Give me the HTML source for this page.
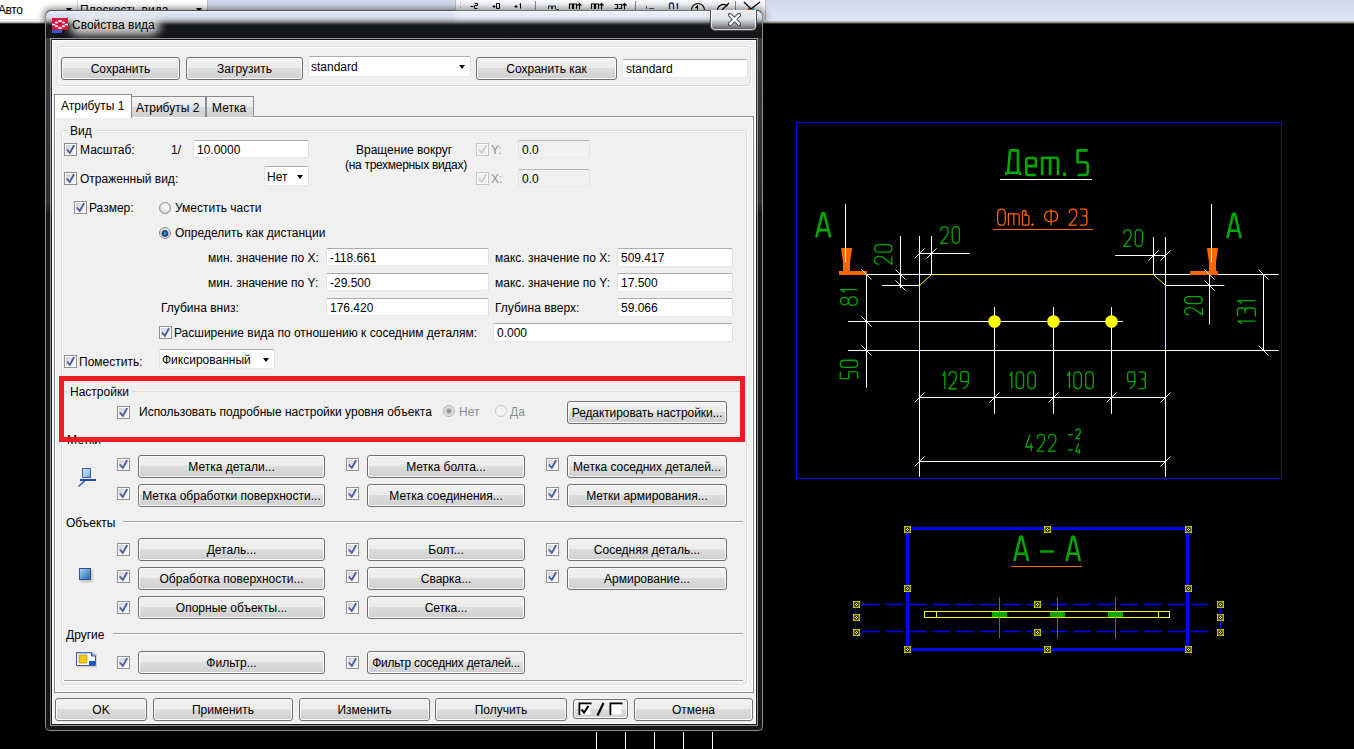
<!DOCTYPE html>
<html><head><meta charset="utf-8"><style>
*{box-sizing:border-box}
html,body{margin:0;padding:0}
body{width:1354px;height:749px;background:#000;position:relative;overflow:hidden;font-family:"Liberation Sans",sans-serif;font-size:12px;color:#000}
.a{position:absolute}
.t{position:absolute;white-space:nowrap;font-size:12px;line-height:14px;margin-left:-1px}
.btn{position:absolute;border:1px solid #707070;border-radius:3px;background:linear-gradient(#f2f2f2 0%,#ebebeb 48%,#dddddd 50%,#cfcfcf 100%);box-shadow:inset 0 0 0 1px #fcfcfc;text-align:center;white-space:nowrap;font-size:12px;padding-top:1px}
.tb{position:absolute;background:#fff;border:1px solid;border-color:#abadb3 #dbdfe6 #e3e9ef #e2e3ea;white-space:nowrap;font-size:12px;padding-left:3px;padding-top:1px;border-radius:2px}
.tbd{background:#f1f1f1;border-color:#b5b7bd #dfe2e8 #e6e9ee #e2e3ea}
.cb{position:absolute;width:13px;height:13px;border:1px solid #8e8f8f;background:#fff}
.cb::before{content:"";position:absolute;left:1px;top:1px;width:9px;height:9px;background:linear-gradient(135deg,#c9ced6,#eceef0 60%,#f6f6f6)}
.cb svg{position:absolute;left:-1px;top:-1px}
.cbd{border-color:#c6c6c6}
.cbd::before{background:#f0f0f0}
.rd{position:absolute;width:12px;height:12px;border-radius:50%;border:1px solid #8e8f8f;background:radial-gradient(circle at 60% 35%,#fff,#e4e6ea 50%,#c8ccd2)}
.grp{position:absolute;border:1px solid #d5dfe5;border-radius:3px;box-shadow:inset 1px 1px 0 #fff,1px 1px 0 #fff}
.sep{position:absolute;height:1px;background:#a0a0a0}
.lbl{position:absolute;background:#f0f0f0;padding:0 2px;white-space:nowrap;line-height:14px}
.arr{position:absolute;width:0;height:0;border-left:3.5px solid transparent;border-right:3.5px solid transparent;border-top:4px solid #000}
</style></head><body>
<svg class="a" style="left:0;top:0" width="1354" height="749" font-family="Liberation Sans"><rect x="796.5" y="122.5" width="485" height="356" fill="none" stroke="#0000ff" stroke-width="1"/><g transform="translate(1005.00,149.10) scale(2.7141,2.7200)" fill="none" stroke="#00a800" stroke-width="2.6" stroke-linecap="butt" stroke-linejoin="round"><path vector-effect="non-scaling-stroke" transform="translate(0.479,0.478) scale(0.8403,0.9044)" d="M1.6 0 L5.1 0 L5.1 9.1 M1.6 0 L0.8 9.1 M0 10 L0 9.1 L6 9.1 L6 10"/><path vector-effect="non-scaling-stroke" transform="translate(7.829,0.478) scale(0.7871,0.9044)" d="M0 6.4 L4.5 6.4 L4.5 4.1 Q4.5 3.1 3.5 3.1 L1 3.1 Q0 3.1 0 4.1 L0 9 Q0 10 1 10 L4.5 10"/><path vector-effect="non-scaling-stroke" transform="translate(13.679,0.478) scale(0.8591,0.9044)" d="M0 10 L0 3 L5.8 3 Q6.8 3 6.8 4 L6.8 10 M3.4 3 L3.4 10"/><path vector-effect="non-scaling-stroke" transform="translate(21.829,0.478) scale(0.2017,0.9044)" d="M0 9.4 L1.2 9.4 L1.2 10 L0 10 Z"/><path vector-effect="non-scaling-stroke" transform="translate(26.729,0.478) scale(0.7962,0.9044)" d="M4.7 0 L0 0 L0 4.8 L3.5 4.8 Q4.7 4.8 4.7 6 L4.7 8.8 Q4.7 10 3.5 10 L0 10"/></g><line x1="1000" y1="179.5" x2="1092" y2="179.5" stroke="#ffffff" stroke-width="1"/><g transform="translate(997.00,208.40) scale(1.7710,1.7400)" fill="none" stroke="#ff6600" stroke-width="1.25" stroke-linecap="butt" stroke-linejoin="round"><path vector-effect="non-scaling-stroke" transform="translate(0.353,0.359) scale(0.8588,0.9282)" d="M0 2.5 Q0 0 2.5 0 Q5 0 5 2.5 L5 7.5 Q5 10 2.5 10 Q0 10 0 7.5 Z"/><path vector-effect="non-scaling-stroke" transform="translate(6.453,0.359) scale(0.8962,0.9282)" d="M0 10 L0 3 L5.8 3 Q6.8 3 6.8 4 L6.8 10 M3.4 3 L3.4 10"/><path vector-effect="non-scaling-stroke" transform="translate(14.353,0.359) scale(0.8396,0.9282)" d="M0 10 L0 2.2 Q0 0.8 1.3 0.8 Q2.5 0.8 2.5 2.2 Q2.5 3.8 1.3 3.8 L3.2 3.8 Q4.4 3.8 4.4 5 L4.4 8.8 Q4.4 10 3.2 10 L0 10"/><path vector-effect="non-scaling-stroke" transform="translate(19.853,0.359) scale(0.4118,0.9282)" d="M0 9.4 L1.2 9.4 L1.2 10 L0 10 Z"/><path vector-effect="non-scaling-stroke" transform="translate(26.853,0.359) scale(0.9129,0.9282)" d="M4.05 0 L4.05 10 M4.05 1.1 Q0 1.1 0 4.5 Q0 7.8 4.05 7.8 Q8.1 7.8 8.1 4.5 Q8.1 1.1 4.05 1.1 Z"/><path vector-effect="non-scaling-stroke" transform="translate(40.753,0.359) scale(0.8588,0.9282)" d="M0 2.6 Q0 0 2.5 0 Q5 0 5 2.8 Q5 4.4 3.9 5.6 L0 10 L5 10"/><path vector-effect="non-scaling-stroke" transform="translate(46.853,0.359) scale(0.8466,0.9282)" d="M0 0 L3.2 0 Q4.6 0 4.6 1.5 L4.6 2.8 Q4.6 4.3 3.2 4.3 L1.6 4.3 M3.2 4.3 Q4.6 4.3 4.6 6 L4.6 8.5 Q4.6 10 3.2 10 L0 10"/></g><line x1="993" y1="229.5" x2="1093" y2="229.5" stroke="#ff6600" stroke-width="1"/><g transform="translate(815.00,212.00) scale(2.6613,2.6600)" fill="none" stroke="#00a800" stroke-width="2.6" stroke-linecap="butt" stroke-linejoin="round"><path vector-effect="non-scaling-stroke" transform="translate(0.488,0.489) scale(0.8424,0.9023)" d="M0 10 L2.7 0 L3.5 0 L6.2 10 M0.9 7 L5.3 7"/></g><g transform="translate(1226.00,212.40) scale(2.5806,2.7000)" fill="none" stroke="#00a800" stroke-width="2.6" stroke-linecap="butt" stroke-linejoin="round"><path vector-effect="non-scaling-stroke" transform="translate(0.504,0.481) scale(0.8375,0.9037)" d="M0 10 L2.7 0 L3.5 0 L6.2 10 M0.9 7 L5.3 7"/></g><line x1="867" y1="274.5" x2="931.5" y2="274.5" stroke="#ffffff" stroke-width="1"/><line x1="931.5" y1="274.5" x2="1153.3" y2="274.5" stroke="#ffff00" stroke-width="1"/><line x1="1153.3" y1="274.5" x2="1278.8" y2="274.5" stroke="#ffffff" stroke-width="1"/><path d="M841 249 Q841 248 842 248 L851 248 Q852 248 852 249 L850 262 L850 271 L843 271 L843 262 Z" fill="#ff6600"/><rect x="839" y="271" width="28" height="4" fill="#ff6600"/><path d="M1207 249 Q1207 248 1208 248 L1217 248 Q1218 248 1218 249 L1216 262 L1216 271 L1209 271 L1209 262 Z" fill="#ff6600"/><rect x="1190" y="271" width="28" height="4" fill="#ff6600"/><line x1="845.5" y1="204" x2="845.5" y2="262" stroke="#ffffff" stroke-width="1"/><line x1="1211.5" y1="204" x2="1211.5" y2="262" stroke="#ffffff" stroke-width="1"/><line x1="919.5" y1="285.5" x2="931.5" y2="274.5" stroke="#ffff00" stroke-width="1"/><line x1="1153.5" y1="274.5" x2="1165.5" y2="285.5" stroke="#ffff00" stroke-width="1"/><line x1="919.5" y1="285.5" x2="919.5" y2="350.5" stroke="#ffff00" stroke-width="1"/><line x1="1165.5" y1="285.5" x2="1165.5" y2="350.5" stroke="#ffff00" stroke-width="1"/><line x1="919.5" y1="350.5" x2="919.5" y2="476.7" stroke="#ffffff" stroke-width="1"/><line x1="1165.5" y1="350.5" x2="1165.5" y2="476.7" stroke="#ffffff" stroke-width="1"/><line x1="866.5" y1="274.5" x2="866.5" y2="387.7" stroke="#ffffff" stroke-width="1"/><line x1="861.5" y1="269.5" x2="871.5" y2="279.5" stroke="#ffffff" stroke-width="1"/><line x1="861.5" y1="316.5" x2="871.5" y2="326.5" stroke="#ffffff" stroke-width="1"/><line x1="861.5" y1="345.5" x2="871.5" y2="355.5" stroke="#ffffff" stroke-width="1"/><g transform="translate(840.00,306.00) rotate(-90) scale(2.0482,1.8000)" fill="none" stroke="#00a800" stroke-width="1.3" stroke-linecap="butt" stroke-linejoin="round"><path vector-effect="non-scaling-stroke" transform="translate(0.317,0.361) scale(0.8678,0.9278)" d="M2.4 4.6 Q0.3 4.6 0.3 2.3 Q0.3 0 2.4 0 Q4.5 0 4.5 2.3 Q4.5 4.6 2.4 4.6 Q0 4.6 0 7.3 Q0 10 2.4 10 Q4.8 10 4.8 7.3 Q4.8 4.6 2.4 4.6 Z"/><path vector-effect="non-scaling-stroke" transform="translate(6.717,0.361) scale(0.6659,0.9278)" d="M0 2.6 L1.9 0 L1.9 10"/></g><g transform="translate(839.60,379.30) rotate(-90) scale(1.7748,1.8800)" fill="none" stroke="#00a800" stroke-width="1.3" stroke-linecap="butt" stroke-linejoin="round"><path vector-effect="non-scaling-stroke" transform="translate(0.366,0.346) scale(0.8442,0.9309)" d="M4.7 0 L0 0 L0 4.8 L3.5 4.8 Q4.7 4.8 4.7 6 L4.7 8.8 Q4.7 10 3.5 10 L0 10"/><path vector-effect="non-scaling-stroke" transform="translate(6.666,0.346) scale(0.8474,0.9309)" d="M0 2.5 Q0 0 2.4 0 Q4.8 0 4.8 2.5 L4.8 7.5 Q4.8 10 2.4 10 Q0 10 0 7.5 Z"/></g><line x1="900.5" y1="236" x2="900.5" y2="288" stroke="#ffffff" stroke-width="1"/><line x1="895.5" y1="269.5" x2="905.5" y2="279.5" stroke="#ffffff" stroke-width="1"/><line x1="895.5" y1="280.5" x2="905.5" y2="290.5" stroke="#ffffff" stroke-width="1"/><line x1="882" y1="285.5" x2="919.5" y2="285.5" stroke="#ffffff" stroke-width="1"/><g transform="translate(874.00,265.00) rotate(-90) scale(1.8421,1.8500)" fill="none" stroke="#00a800" stroke-width="1.3" stroke-linecap="butt" stroke-linejoin="round"><path vector-effect="non-scaling-stroke" transform="translate(0.353,0.351) scale(0.8589,0.9297)" d="M0 2.6 Q0 0 2.5 0 Q5 0 5 2.8 Q5 4.4 3.9 5.6 L0 10 L5 10"/><path vector-effect="non-scaling-stroke" transform="translate(6.953,0.351) scale(0.8530,0.9297)" d="M0 2.5 Q0 0 2.4 0 Q4.8 0 4.8 2.5 L4.8 7.5 Q4.8 10 2.4 10 Q0 10 0 7.5 Z"/></g><line x1="919.5" y1="236" x2="919.5" y2="285.5" stroke="#ffffff" stroke-width="1"/><line x1="931.5" y1="236" x2="931.5" y2="274.5" stroke="#ffffff" stroke-width="1"/><line x1="919.5" y1="253.5" x2="969.8" y2="253.5" stroke="#ffffff" stroke-width="1"/><line x1="914.5" y1="258.5" x2="924.5" y2="248.5" stroke="#ffffff" stroke-width="1"/><line x1="926.5" y1="258.5" x2="936.5" y2="248.5" stroke="#ffffff" stroke-width="1"/><g transform="translate(940.00,226.00) scale(1.7544,1.8000)" fill="none" stroke="#00a800" stroke-width="1.3" stroke-linecap="butt" stroke-linejoin="round"><path vector-effect="non-scaling-stroke" transform="translate(0.370,0.361) scale(0.8518,0.9278)" d="M0 2.6 Q0 0 2.5 0 Q5 0 5 2.8 Q5 4.4 3.9 5.6 L0 10 L5 10"/><path vector-effect="non-scaling-stroke" transform="translate(6.970,0.361) scale(0.8456,0.9278)" d="M0 2.5 Q0 0 2.4 0 Q4.8 0 4.8 2.5 L4.8 7.5 Q4.8 10 2.4 10 Q0 10 0 7.5 Z"/></g><line x1="1153.5" y1="237" x2="1153.5" y2="274.5" stroke="#ffffff" stroke-width="1"/><line x1="1165.5" y1="237" x2="1165.5" y2="285.5" stroke="#ffffff" stroke-width="1"/><line x1="1115.2" y1="255.5" x2="1165.5" y2="255.5" stroke="#ffffff" stroke-width="1"/><line x1="1148.5" y1="260.5" x2="1158.5" y2="250.5" stroke="#ffffff" stroke-width="1"/><line x1="1160.5" y1="260.5" x2="1170.5" y2="250.5" stroke="#ffffff" stroke-width="1"/><g transform="translate(1123.00,229.00) scale(1.7544,1.8000)" fill="none" stroke="#00a800" stroke-width="1.3" stroke-linecap="butt" stroke-linejoin="round"><path vector-effect="non-scaling-stroke" transform="translate(0.370,0.361) scale(0.8518,0.9278)" d="M0 2.6 Q0 0 2.5 0 Q5 0 5 2.8 Q5 4.4 3.9 5.6 L0 10 L5 10"/><path vector-effect="non-scaling-stroke" transform="translate(6.970,0.361) scale(0.8456,0.9278)" d="M0 2.5 Q0 0 2.4 0 Q4.8 0 4.8 2.5 L4.8 7.5 Q4.8 10 2.4 10 Q0 10 0 7.5 Z"/></g><line x1="1209.5" y1="274.5" x2="1209.5" y2="324.4" stroke="#ffffff" stroke-width="1"/><line x1="1204.5" y1="269.5" x2="1214.5" y2="279.5" stroke="#ffffff" stroke-width="1"/><line x1="1204.5" y1="280.5" x2="1214.5" y2="290.5" stroke="#ffffff" stroke-width="1"/><line x1="1165.5" y1="285.5" x2="1224.3" y2="285.5" stroke="#ffffff" stroke-width="1"/><g transform="translate(1184.00,315.50) rotate(-90) scale(1.7105,1.9000)" fill="none" stroke="#00a800" stroke-width="1.3" stroke-linecap="butt" stroke-linejoin="round"><path vector-effect="non-scaling-stroke" transform="translate(0.380,0.342) scale(0.8480,0.9316)" d="M0 2.6 Q0 0 2.5 0 Q5 0 5 2.8 Q5 4.4 3.9 5.6 L0 10 L5 10"/><path vector-effect="non-scaling-stroke" transform="translate(6.980,0.342) scale(0.8417,0.9316)" d="M0 2.5 Q0 0 2.4 0 Q4.8 0 4.8 2.5 L4.8 7.5 Q4.8 10 2.4 10 Q0 10 0 7.5 Z"/></g><line x1="1263.5" y1="274.5" x2="1263.5" y2="350.5" stroke="#ffffff" stroke-width="1"/><line x1="1258.5" y1="269.5" x2="1268.5" y2="279.5" stroke="#ffffff" stroke-width="1"/><line x1="1258.5" y1="345.5" x2="1268.5" y2="355.5" stroke="#ffffff" stroke-width="1"/><g transform="translate(1237.00,324.40) rotate(-90) scale(2.1034,1.9000)" fill="none" stroke="#00a800" stroke-width="1.3" stroke-linecap="butt" stroke-linejoin="round"><path vector-effect="non-scaling-stroke" transform="translate(0.309,0.342) scale(0.6747,0.9316)" d="M0 2.6 L1.9 0 L1.9 10"/><path vector-effect="non-scaling-stroke" transform="translate(3.809,0.342) scale(0.8656,0.9316)" d="M0 0 L3.2 0 Q4.6 0 4.6 1.5 L4.6 2.8 Q4.6 4.3 3.2 4.3 L1.6 4.3 M3.2 4.3 Q4.6 4.3 4.6 6 L4.6 8.5 Q4.6 10 3.2 10 L0 10"/><path vector-effect="non-scaling-stroke" transform="translate(10.009,0.342) scale(0.6747,0.9316)" d="M0 2.6 L1.9 0 L1.9 10"/></g><line x1="848" y1="321.5" x2="1123.2" y2="321.5" stroke="#ffffff" stroke-width="1"/><line x1="848" y1="350.5" x2="1278.8" y2="350.5" stroke="#ffffff" stroke-width="1"/><line x1="994.5" y1="307" x2="994.5" y2="413.8" stroke="#ffffff" stroke-width="1"/><circle cx="994.5" cy="321.5" r="6.3" fill="#ffff00"/><line x1="1053.5" y1="307" x2="1053.5" y2="413.8" stroke="#ffffff" stroke-width="1"/><circle cx="1053.5" cy="321.5" r="6.3" fill="#ffff00"/><line x1="1111.5" y1="307" x2="1111.5" y2="413.8" stroke="#ffffff" stroke-width="1"/><circle cx="1111.5" cy="321.5" r="6.3" fill="#ffff00"/><line x1="919.5" y1="397.5" x2="1165.5" y2="397.5" stroke="#ffffff" stroke-width="1"/><line x1="914.5" y1="402.5" x2="924.5" y2="392.5" stroke="#ffffff" stroke-width="1"/><line x1="989.5" y1="402.5" x2="999.5" y2="392.5" stroke="#ffffff" stroke-width="1"/><line x1="1048.5" y1="402.5" x2="1058.5" y2="392.5" stroke="#ffffff" stroke-width="1"/><line x1="1106.5" y1="402.5" x2="1116.5" y2="392.5" stroke="#ffffff" stroke-width="1"/><line x1="1160.5" y1="402.5" x2="1170.5" y2="392.5" stroke="#ffffff" stroke-width="1"/><g transform="translate(942.00,371.00) scale(1.7881,1.8400)" fill="none" stroke="#00a800" stroke-width="1.3" stroke-linecap="butt" stroke-linejoin="round"><path vector-effect="non-scaling-stroke" transform="translate(0.364,0.353) scale(0.6173,0.9293)" d="M0 2.6 L1.9 0 L1.9 10"/><path vector-effect="non-scaling-stroke" transform="translate(3.864,0.353) scale(0.8546,0.9293)" d="M0 2.6 Q0 0 2.5 0 Q5 0 5 2.8 Q5 4.4 3.9 5.6 L0 10 L5 10"/><path vector-effect="non-scaling-stroke" transform="translate(10.464,0.353) scale(0.8546,0.9293)" d="M5 5.8 L1.3 5.8 Q0 5.8 0 4.5 L0 1.5 Q0 0 1.5 0 L3.5 0 Q5 0 5 1.5 L5 6 Q5 8.6 1.3 10"/></g><g transform="translate(1009.00,371.20) scale(1.8367,1.8000)" fill="none" stroke="#00a800" stroke-width="1.3" stroke-linecap="butt" stroke-linejoin="round"><path vector-effect="non-scaling-stroke" transform="translate(0.354,0.361) scale(0.6275,0.9278)" d="M0 2.6 L1.9 0 L1.9 10"/><path vector-effect="non-scaling-stroke" transform="translate(3.854,0.361) scale(0.8525,0.9278)" d="M0 2.5 Q0 0 2.4 0 Q4.8 0 4.8 2.5 L4.8 7.5 Q4.8 10 2.4 10 Q0 10 0 7.5 Z"/><path vector-effect="non-scaling-stroke" transform="translate(10.254,0.361) scale(0.8525,0.9278)" d="M0 2.5 Q0 0 2.4 0 Q4.8 0 4.8 2.5 L4.8 7.5 Q4.8 10 2.4 10 Q0 10 0 7.5 Z"/></g><g transform="translate(1066.60,371.20) scale(1.8639,1.8000)" fill="none" stroke="#00a800" stroke-width="1.3" stroke-linecap="butt" stroke-linejoin="round"><path vector-effect="non-scaling-stroke" transform="translate(0.349,0.361) scale(0.6329,0.9278)" d="M0 2.6 L1.9 0 L1.9 10"/><path vector-effect="non-scaling-stroke" transform="translate(3.849,0.361) scale(0.8547,0.9278)" d="M0 2.5 Q0 0 2.4 0 Q4.8 0 4.8 2.5 L4.8 7.5 Q4.8 10 2.4 10 Q0 10 0 7.5 Z"/><path vector-effect="non-scaling-stroke" transform="translate(10.249,0.361) scale(0.8547,0.9278)" d="M0 2.5 Q0 0 2.4 0 Q4.8 0 4.8 2.5 L4.8 7.5 Q4.8 10 2.4 10 Q0 10 0 7.5 Z"/></g><g transform="translate(1127.00,371.20) scale(1.6964,1.8000)" fill="none" stroke="#00a800" stroke-width="1.3" stroke-linecap="butt" stroke-linejoin="round"><path vector-effect="non-scaling-stroke" transform="translate(0.383,0.361) scale(0.8467,0.9278)" d="M5 5.8 L1.3 5.8 Q0 5.8 0 4.5 L0 1.5 Q0 0 1.5 0 L3.5 0 Q5 0 5 1.5 L5 6 Q5 8.6 1.3 10"/><path vector-effect="non-scaling-stroke" transform="translate(6.983,0.361) scale(0.8334,0.9278)" d="M0 0 L3.2 0 Q4.6 0 4.6 1.5 L4.6 2.8 Q4.6 4.3 3.2 4.3 L1.6 4.3 M3.2 4.3 Q4.6 4.3 4.6 6 L4.6 8.5 Q4.6 10 3.2 10 L0 10"/></g><line x1="919.5" y1="461.5" x2="1165.5" y2="461.5" stroke="#ffffff" stroke-width="1"/><line x1="914.5" y1="466.5" x2="924.5" y2="456.5" stroke="#ffffff" stroke-width="1"/><line x1="1160.5" y1="466.5" x2="1170.5" y2="456.5" stroke="#ffffff" stroke-width="1"/><g transform="translate(1025.00,433.80) scale(1.7213,1.8000)" fill="none" stroke="#00a800" stroke-width="1.3" stroke-linecap="butt" stroke-linejoin="round"><path vector-effect="non-scaling-stroke" transform="translate(0.378,0.361) scale(0.8519,0.9278)" d="M3 0 L0 7.5 L5.1 7.5 M3.8 5 L3.8 10"/><path vector-effect="non-scaling-stroke" transform="translate(7.078,0.361) scale(0.8490,0.9278)" d="M0 2.6 Q0 0 2.5 0 Q5 0 5 2.8 Q5 4.4 3.9 5.6 L0 10 L5 10"/><path vector-effect="non-scaling-stroke" transform="translate(13.678,0.361) scale(0.8490,0.9278)" d="M0 2.6 Q0 0 2.5 0 Q5 0 5 2.8 Q5 4.4 3.9 5.6 L0 10 L5 10"/></g><g transform="translate(1067.00,428.20) scale(1.1475,1.1000)" fill="none" stroke="#00a800" stroke-width="1.3" stroke-linecap="butt" stroke-linejoin="round"><path vector-effect="non-scaling-stroke" transform="translate(0.566,0.591) scale(0.7977,0.8818)" d="M0 6 L5.6 6"/><path vector-effect="non-scaling-stroke" transform="translate(7.766,0.591) scale(0.7734,0.8818)" d="M0 2.6 Q0 0 2.5 0 Q5 0 5 2.8 Q5 4.4 3.9 5.6 L0 10 L5 10"/></g><g transform="translate(1067.00,443.00) scale(1.1382,1.2000)" fill="none" stroke="#00a800" stroke-width="1.3" stroke-linecap="butt" stroke-linejoin="round"><path vector-effect="non-scaling-stroke" transform="translate(0.571,0.542) scale(0.7960,0.8917)" d="M0 6 L5.6 6"/><path vector-effect="non-scaling-stroke" transform="translate(7.771,0.542) scale(0.7761,0.8917)" d="M3 0 L0 7.5 L5.1 7.5 M3.8 5 L3.8 10"/></g><rect x="907.5" y="528.5" width="280" height="121" fill="none" stroke="#0000ff" stroke-width="3"/><g transform="translate(1013.00,535.40) scale(2.6290,2.7000)" fill="none" stroke="#00a800" stroke-width="2.6" stroke-linecap="butt" stroke-linejoin="round"><path vector-effect="non-scaling-stroke" transform="translate(0.494,0.481) scale(0.8405,0.9037)" d="M0 10 L2.7 0 L3.5 0 L6.2 10 M0.9 7 L5.3 7"/></g><line x1="1040" y1="551.5" x2="1054" y2="551.5" stroke="#00a800" stroke-width="2.5"/><g transform="translate(1065.20,535.40) scale(2.5806,2.7000)" fill="none" stroke="#00a800" stroke-width="2.6" stroke-linecap="butt" stroke-linejoin="round"><path vector-effect="non-scaling-stroke" transform="translate(0.504,0.481) scale(0.8375,0.9037)" d="M0 10 L2.7 0 L3.5 0 L6.2 10 M0.9 7 L5.3 7"/></g><line x1="1011" y1="566.5" x2="1082" y2="566.5" stroke="#ff6600" stroke-width="1"/><line x1="862" y1="604.5" x2="1214" y2="604.5" stroke="#0000ff" stroke-width="1.4" stroke-dasharray="17.5 6"/><line x1="862" y1="631.5" x2="1214" y2="631.5" stroke="#0000ff" stroke-width="1.4" stroke-dasharray="17.5 6"/><line x1="855.5" y1="604.4" x2="855.5" y2="631.6" stroke="#0000ff" stroke-width="1"/><line x1="1220.5" y1="604.4" x2="1220.5" y2="631.6" stroke="#0000ff" stroke-width="1"/><rect x="924.5" y="611.5" width="245" height="6" fill="none" stroke="#ffff00" stroke-width="1"/><line x1="936.5" y1="611.4" x2="936.5" y2="617.6" stroke="#ffff00" stroke-width="1"/><line x1="1158.5" y1="611.4" x2="1158.5" y2="617.6" stroke="#ffff00" stroke-width="1"/><line x1="999.5" y1="597.3" x2="999.5" y2="638" stroke="#00a800" stroke-width="1"/><rect x="992" y="612" width="15" height="5" fill="#00a800"/><line x1="1057.5" y1="597.3" x2="1057.5" y2="638" stroke="#00a800" stroke-width="1"/><rect x="1050" y="612" width="15" height="5" fill="#00a800"/><line x1="1115.5" y1="597.3" x2="1115.5" y2="638" stroke="#00a800" stroke-width="1"/><rect x="1108" y="612" width="15" height="5" fill="#00a800"/><rect x="904" y="526" width="7" height="7" fill="#ffff00"/><rect x="905" y="527" width="5" height="5" fill="none" stroke="#000" stroke-width="0.6"/><circle cx="907.5" cy="529.5" r="2" fill="none" stroke="#000" stroke-width="0.8"/><path d="M906 528L909 531M906 531L909 528" stroke="#000" stroke-width="0.8"/><rect x="1044" y="526" width="7" height="7" fill="#ffff00"/><rect x="1045" y="527" width="5" height="5" fill="none" stroke="#000" stroke-width="0.6"/><circle cx="1047.5" cy="529.5" r="2" fill="none" stroke="#000" stroke-width="0.8"/><path d="M1046 528L1049 531M1046 531L1049 528" stroke="#000" stroke-width="0.8"/><rect x="1185" y="526" width="7" height="7" fill="#ffff00"/><rect x="1186" y="527" width="5" height="5" fill="none" stroke="#000" stroke-width="0.6"/><circle cx="1188.5" cy="529.5" r="2" fill="none" stroke="#000" stroke-width="0.8"/><path d="M1187 528L1190 531M1187 531L1190 528" stroke="#000" stroke-width="0.8"/><rect x="904" y="585" width="7" height="7" fill="#ffff00"/><rect x="905" y="586" width="5" height="5" fill="none" stroke="#000" stroke-width="0.6"/><circle cx="907.5" cy="588.5" r="2" fill="none" stroke="#000" stroke-width="0.8"/><path d="M906 587L909 590M906 590L909 587" stroke="#000" stroke-width="0.8"/><rect x="1185" y="585" width="7" height="7" fill="#ffff00"/><rect x="1186" y="586" width="5" height="5" fill="none" stroke="#000" stroke-width="0.6"/><circle cx="1188.5" cy="588.5" r="2" fill="none" stroke="#000" stroke-width="0.8"/><path d="M1187 587L1190 590M1187 590L1190 587" stroke="#000" stroke-width="0.8"/><rect x="904" y="646" width="7" height="7" fill="#ffff00"/><rect x="905" y="647" width="5" height="5" fill="none" stroke="#000" stroke-width="0.6"/><circle cx="907.5" cy="649.5" r="2" fill="none" stroke="#000" stroke-width="0.8"/><path d="M906 648L909 651M906 651L909 648" stroke="#000" stroke-width="0.8"/><rect x="1044" y="646" width="7" height="7" fill="#ffff00"/><rect x="1045" y="647" width="5" height="5" fill="none" stroke="#000" stroke-width="0.6"/><circle cx="1047.5" cy="649.5" r="2" fill="none" stroke="#000" stroke-width="0.8"/><path d="M1046 648L1049 651M1046 651L1049 648" stroke="#000" stroke-width="0.8"/><rect x="1185" y="646" width="7" height="7" fill="#ffff00"/><rect x="1186" y="647" width="5" height="5" fill="none" stroke="#000" stroke-width="0.6"/><circle cx="1188.5" cy="649.5" r="2" fill="none" stroke="#000" stroke-width="0.8"/><path d="M1187 648L1190 651M1187 651L1190 648" stroke="#000" stroke-width="0.8"/><rect x="853" y="601" width="7" height="7" fill="#ffff00"/><rect x="854" y="602" width="5" height="5" fill="none" stroke="#000" stroke-width="0.6"/><circle cx="856.5" cy="604.5" r="2" fill="none" stroke="#000" stroke-width="0.8"/><path d="M855 603L858 606M855 606L858 603" stroke="#000" stroke-width="0.8"/><rect x="853" y="614" width="7" height="7" fill="#ffff00"/><rect x="854" y="615" width="5" height="5" fill="none" stroke="#000" stroke-width="0.6"/><circle cx="856.5" cy="617.5" r="2" fill="none" stroke="#000" stroke-width="0.8"/><path d="M855 616L858 619M855 619L858 616" stroke="#000" stroke-width="0.8"/><rect x="853" y="629" width="7" height="7" fill="#ffff00"/><rect x="854" y="630" width="5" height="5" fill="none" stroke="#000" stroke-width="0.6"/><circle cx="856.5" cy="632.5" r="2" fill="none" stroke="#000" stroke-width="0.8"/><path d="M855 631L858 634M855 634L858 631" stroke="#000" stroke-width="0.8"/><rect x="1034" y="601" width="7" height="7" fill="#ffff00"/><rect x="1035" y="602" width="5" height="5" fill="none" stroke="#000" stroke-width="0.6"/><circle cx="1037.5" cy="604.5" r="2" fill="none" stroke="#000" stroke-width="0.8"/><path d="M1036 603L1039 606M1036 606L1039 603" stroke="#000" stroke-width="0.8"/><rect x="1034" y="629" width="7" height="7" fill="#ffff00"/><rect x="1035" y="630" width="5" height="5" fill="none" stroke="#000" stroke-width="0.6"/><circle cx="1037.5" cy="632.5" r="2" fill="none" stroke="#000" stroke-width="0.8"/><path d="M1036 631L1039 634M1036 634L1039 631" stroke="#000" stroke-width="0.8"/><rect x="1217" y="601" width="7" height="7" fill="#ffff00"/><rect x="1218" y="602" width="5" height="5" fill="none" stroke="#000" stroke-width="0.6"/><circle cx="1220.5" cy="604.5" r="2" fill="none" stroke="#000" stroke-width="0.8"/><path d="M1219 603L1222 606M1219 606L1222 603" stroke="#000" stroke-width="0.8"/><rect x="1217" y="614" width="7" height="7" fill="#ffff00"/><rect x="1218" y="615" width="5" height="5" fill="none" stroke="#000" stroke-width="0.6"/><circle cx="1220.5" cy="617.5" r="2" fill="none" stroke="#000" stroke-width="0.8"/><path d="M1219 616L1222 619M1219 619L1222 616" stroke="#000" stroke-width="0.8"/><rect x="1217" y="629" width="7" height="7" fill="#ffff00"/><rect x="1218" y="630" width="5" height="5" fill="none" stroke="#000" stroke-width="0.6"/><circle cx="1220.5" cy="632.5" r="2" fill="none" stroke="#000" stroke-width="0.8"/><path d="M1219 631L1222 634M1219 634L1222 631" stroke="#000" stroke-width="0.8"/><line x1="596.5" y1="732" x2="596.5" y2="749" stroke="#ffffff" stroke-width="1"/><line x1="625.5" y1="732" x2="625.5" y2="749" stroke="#ffffff" stroke-width="1"/><line x1="654.5" y1="732" x2="654.5" y2="749" stroke="#ffffff" stroke-width="1"/><line x1="683.5" y1="732" x2="683.5" y2="749" stroke="#ffffff" stroke-width="1"/><line x1="712.5" y1="732" x2="712.5" y2="749" stroke="#ffffff" stroke-width="1"/></svg>

<div class="a" style="left:0;top:0;width:1354px;height:24px;background:linear-gradient(#d1d7eb 0px,#dfe5f5 21px,#b4b8c4 21px,#b4b8c4 22px,#8a8a8a 22px,#8a8a8a 23px,#383838 23px)"></div>
<div class="a" style="left:0;top:0;width:208px;height:23px;background:linear-gradient(#fff 0,#fff 82%,#e2e8ef 82%,#e2e8ef 87%,#fff 87%,#fff 90%,#9b9b9b 100%);border-right:1px solid #b9bec8"></div>
<div class="t" style="left:-1px;top:3px;letter-spacing:-0.4px">Авто</div>
<div class="arr" style="left:66px;top:8px"></div>
<div class="a" style="left:77px;top:0;width:1px;height:19px;background:#d0d4da"></div>
<div class="t" style="left:81px;top:3px">Плоскость вида</div>
<div class="arr" style="left:196px;top:8px"></div>
<div class="a" style="left:455px;top:0;width:311px;height:22px;background:linear-gradient(#f7f8fa,#eceef2);border-left:1px solid #b8c0d0;border-right:1px solid #b8c0d0"></div>
<svg class="a" style="left:455px;top:0" width="311" height="12" fill="none" stroke="#000" stroke-width="1"><path d="M5 3h1M5 7h1" stroke="#999"/><path d="M15.5 6.5h3M19.5 3.5h3v2h-3v3h3" /><path d="M37.5 6.5h3M39 5v3M41.5 3.5h3v5h-3z"/><path d="M59.5 6.5h3M61 5v3M64.5 4.5l1-1v5"/><path d="M80.5 1v10" stroke="#888"/><path d="M93.5 9v-3h3v3M97.5 9v-3h3v3M101 9.5h3" stroke="#334"/><path d="M114.5 9v-5h3v5M118.5 9v-5h3v5M124.5 9.5v-6M122.5 5.5l2-2 2 2" stroke-width="1.2"/><path d="M136.5 9v-5h3v5M140.5 9v-5h3v5M146.5 9.5v-6M144.5 5.5l2-2 2 2" stroke-width="1.2"/><path d="M159.5 4.5h3v4h-3M163.5 4.5h3v4h-3M169.5 9.5v-6M167.5 5.5l2-2 2 2" stroke-width="1.2"/><path d="M180.5 1v10" stroke="#888"/><path d="M191.5 6v3M194 8.5h5" stroke="#a05020"/><path d="M195 8.5h4" stroke="#2050a0"/><path d="M214.5 9v-4a2 2 0 0 1 4 0v4M221.5 5l1-1v5" stroke="#203060" stroke-width="1.3"/><path d="M236.5 10a6.5 6.5 0 0 1 13 0M242.5 10v-4l-2 2" stroke-width="1.2"/><path d="M262.5 10a6 6 0 0 1 10-4M266 11l8-8" stroke-width="1.2"/><path d="M280.5 1v10" stroke="#888"/><path d="M289 2l7 7 9-7" stroke-width="1.3"/><path d="M294 8v3" stroke="#c06010" stroke-width="2"/><path d="M298 8v3" stroke="#2080d0" stroke-width="1.5"/></svg>
<div class="a" style="left:43px;top:8px;width:722px;height:20px;border-radius:8px;background:rgba(0,0,0,0.45);filter:blur(3px)"></div>
<div class="a" style="left:45px;top:10px;width:718px;height:721px;border-radius:6px 6px 5px 5px;background:#141518;border:1px solid #8f8f8f;border-top-color:#505055"></div>
<div class="a" style="left:46px;top:11px;width:716px;height:27px;border-radius:5px 5px 0 0;background:linear-gradient(#eef3fb 0px,#dde5f5 2px,#d5dded 6px,#c0c5cf 8px,#9da0a5 10px,#606266 12px,#303133 13px,#18191c 15px,#141518 100%)"></div>
<div class="a" style="left:455px;top:11px;width:255px;height:9px;background:linear-gradient(rgba(255,255,255,0.5),rgba(255,255,255,0.25));filter:blur(2px)"></div>
<div class="a" style="left:70px;top:16px;width:90px;height:19px;border-radius:9px;background:rgba(240,240,240,0.85);filter:blur(4px)"></div>
<div class="a" style="left:50px;top:38px;width:708px;height:688px;border:1px solid #959595;background:#141518"></div>
<div class="a" style="left:46px;top:38px;width:4px;height:174px;background:linear-gradient(#3a3b3d,#2c2d2f 95%,#18191b)"></div>
<div class="a" style="left:758px;top:38px;width:4px;height:174px;background:linear-gradient(#3a3b3d,#2c2d2f 95%,#18191b)"></div>
<div class="a" style="left:51px;top:39px;width:1px;height:173px;background:#2a2b2d"></div>
<div class="a" style="left:756px;top:39px;width:1px;height:173px;background:#2a2b2d"></div>
<div class="a" style="left:52px;top:40px;width:704px;height:684px;background:#f0f0f0;border:1px solid #fff;border-right-color:#fff"></div>
<svg class="a" style="left:50px;top:16px" width="20" height="19"><path d="M2 2 L17 2 L18 0.8 L18 14 L2 14 Z" fill="#dc1440"/><g fill="#fff"><ellipse cx="10" cy="5" rx="2" ry="1.1"/><ellipse cx="6.5" cy="6.6" rx="1.6" ry="1"/><ellipse cx="13.5" cy="6.6" rx="1.6" ry="1"/><rect x="2" y="7.8" width="3.3" height="1.6"/><rect x="14.8" y="7.8" width="3.2" height="1.6"/><ellipse cx="6.5" cy="10.3" rx="1.6" ry="1"/><ellipse cx="13.5" cy="10.3" rx="1.6" ry="1"/><ellipse cx="10" cy="12" rx="2" ry="1.1"/></g><rect x="2" y="14" width="10" height="3" fill="#2c5cc8"/></svg>
<div class="t" style="left:73px;top:18px;color:#000">Свойства вида</div>
<div class="a" style="left:710px;top:10px;width:47px;height:21px;border:1px solid #4a4a50;border-top:0;border-radius:0 0 5px 5px;background:linear-gradient(#e9ebee 0%,#e2e4e8 45%,#a8aab0 70%,#55575c 100%);box-shadow:inset 0 0 0 1px rgba(255,255,255,0.7)"></div>
<svg class="a" style="left:728px;top:13px" width="13" height="13"><path d="M2 2 L11 11 M11 2 L2 11" stroke="#3c4150" stroke-width="4.2" stroke-linecap="round"/><path d="M2.3 2.3 L10.7 10.7 M10.7 2.3 L2.3 10.7" stroke="#fafafa" stroke-width="2.4" stroke-linecap="square"/></svg>
<div class="grp" style="left:57px;top:46px;width:694px;height:40px"></div>
<div class="btn" style="left:61px;top:57px;width:119px;height:23px;line-height:21px;">Сохранить</div>
<div class="btn" style="left:186px;top:57px;width:117px;height:23px;line-height:21px;">Загрузить</div>
<div class="tb" style="left:308px;top:56px;width:163px;height:21px;line-height:19px;padding-left:2px">standard</div>
<div class="arr" style="left:459px;top:65px"></div>
<div class="btn" style="left:476px;top:57px;width:141px;height:23px;line-height:21px;">Сохранить как</div>
<div class="tb" style="left:622px;top:59px;width:126px;height:19px;line-height:17px">standard</div>
<div class="a" style="left:54px;top:116px;width:700px;height:577px;border:1px solid #898c95;background:#f0f0f0;box-shadow:inset 1px 1px 0 #fff,inset -1px -1px 0 #fff"></div>
<div class="a" style="left:131px;top:96px;width:75px;height:21px;border:1px solid #898c95;border-bottom:0;background:linear-gradient(#f2f2f2,#ebebeb 48%,#dbdbdb 52%,#cfcfcf)"></div>
<div class="a" style="left:206px;top:96px;width:48px;height:21px;border:1px solid #898c95;border-bottom:0;background:linear-gradient(#f2f2f2,#ebebeb 48%,#dbdbdb 52%,#cfcfcf)"></div>
<div class="a" style="left:54px;top:94px;width:78px;height:24px;border:1px solid #898c95;border-bottom:0;background:#fff"></div>
<div class="t" style="left:62px;top:99px;">Атрибуты 1</div>
<div class="t" style="left:137px;top:101px;">Атрибуты 2</div>
<div class="t" style="left:213px;top:101px;">Метка</div>
<div class="grp" style="left:61px;top:130px;width:686px;height:555px"></div>
<div class="lbl" style="left:68px;top:124px">Вид</div>
<div class="cb" style="left:64px;top:143px"><svg width="13" height="13"><path d="M3.3 7 L5.8 9.9 L9.8 2.8" stroke="#4a5f9f" stroke-width="1.9" fill="none" stroke-linecap="round"/></svg></div>
<div class="t" style="left:81px;top:143px;">Масштаб:</div>
<div class="t" style="left:172px;top:143px;">1/</div>
<div class="tb" style="left:193px;top:140px;width:116px;height:18px;line-height:16px">10.0000</div>
<div class="cb" style="left:64px;top:172px"><svg width="13" height="13"><path d="M3.3 7 L5.8 9.9 L9.8 2.8" stroke="#4a5f9f" stroke-width="1.9" fill="none" stroke-linecap="round"/></svg></div>
<div class="t" style="left:81px;top:172px;">Отраженный вид:</div>
<div class="tb" style="left:264px;top:166px;width:45px;height:20px;line-height:18px;padding-left:2px">Нет</div>
<div class="arr" style="left:297px;top:175px"></div>
<div class="t" style="left:357px;top:143px;">Вращение вокруг</div>
<div class="t" style="left:346px;top:158px;letter-spacing:-0.3px">(на трехмерных видах)</div>
<div class="cb cbd" style="left:476px;top:143px"><svg width="13" height="13"><path d="M3.3 7 L5.8 9.9 L9.8 2.8" stroke="#c8c8c8" stroke-width="1.6" fill="none" stroke-linecap="round"/></svg></div>
<div class="t" style="left:492px;top:143px;color:#8d8d8d">Y:</div>
<div class="tb tbd" style="left:518px;top:140px;width:72px;height:18px;line-height:16px">0.0</div>
<div class="cb cbd" style="left:476px;top:172px"><svg width="13" height="13"><path d="M3.3 7 L5.8 9.9 L9.8 2.8" stroke="#c8c8c8" stroke-width="1.6" fill="none" stroke-linecap="round"/></svg></div>
<div class="t" style="left:492px;top:172px;color:#8d8d8d">X:</div>
<div class="tb tbd" style="left:518px;top:169px;width:72px;height:18px;line-height:16px">0.0</div>
<div class="cb" style="left:74px;top:201px"><svg width="13" height="13"><path d="M3.3 7 L5.8 9.9 L9.8 2.8" stroke="#4a5f9f" stroke-width="1.9" fill="none" stroke-linecap="round"/></svg></div>
<div class="t" style="left:90px;top:201px;">Размер:</div>
<div class="rd" style="left:159px;top:202px"></div>
<div class="t" style="left:176px;top:201px;">Уместить части</div>
<div class="rd" style="left:159px;top:227px;background:radial-gradient(circle at 50% 55%,#50c0f8 0,#1a78c0 1.3px,#0a3c78 2.8px,#5a6a80 3.2px,#d0d0d0 3.8px,#f8f8f8 6px)"></div>
<div class="t" style="left:176px;top:226px;">Определить как дистанции</div>
<div class="t" style="left:209px;top:251px;">мин. значение по X:</div>
<div class="tb" style="left:326px;top:248px;width:163px;height:18px;line-height:16px">-118.661</div>
<div class="t" style="left:209px;top:276px;">мин. значение по Y:</div>
<div class="tb" style="left:326px;top:273px;width:163px;height:18px;line-height:16px">-29.500</div>
<div class="t" style="left:162px;top:301px;">Глубина вниз:</div>
<div class="tb" style="left:326px;top:298px;width:163px;height:18px;line-height:16px">176.420</div>
<div class="t" style="left:496px;top:251px;">макс. значение по X:</div>
<div class="tb" style="left:617px;top:248px;width:116px;height:19px;line-height:17px">509.417</div>
<div class="t" style="left:496px;top:276px;">макс. значение по Y:</div>
<div class="tb" style="left:617px;top:273px;width:116px;height:19px;line-height:17px">17.500</div>
<div class="t" style="left:496px;top:301px;">Глубина вверх:</div>
<div class="tb" style="left:617px;top:298px;width:116px;height:19px;line-height:17px">59.066</div>
<div class="cb" style="left:159px;top:326px"><svg width="13" height="13"><path d="M3.3 7 L5.8 9.9 L9.8 2.8" stroke="#4a5f9f" stroke-width="1.9" fill="none" stroke-linecap="round"/></svg></div>
<div class="t" style="left:175px;top:326px;">Расширение вида по отношению к соседним деталям:</div>
<div class="tb" style="left:493px;top:323px;width:240px;height:19px;line-height:17px">0.000</div>
<div class="cb" style="left:64px;top:355px"><svg width="13" height="13"><path d="M3.3 7 L5.8 9.9 L9.8 2.8" stroke="#4a5f9f" stroke-width="1.9" fill="none" stroke-linecap="round"/></svg></div>
<div class="t" style="left:80px;top:355px;">Поместить:</div>
<div class="tb" style="left:159px;top:349px;width:116px;height:20px;line-height:18px;padding-left:2px">Фиксированный</div>
<div class="arr" style="left:263px;top:358px"></div>
<div class="a" style="left:64px;top:391px;width:677px;height:1px;background:#d5dfe5"></div>
<div class="lbl" style="left:68px;top:385px">Настройки</div>
<div class="cb" style="left:117px;top:406px"><svg width="13" height="13"><path d="M3.3 7 L5.8 9.9 L9.8 2.8" stroke="#4a5f9f" stroke-width="1.9" fill="none" stroke-linecap="round"/></svg></div>
<div class="t" style="left:140px;top:405px;">Использовать подробные настройки уровня объекта</div>
<div class="rd" style="left:443px;top:405px;border-color:#b0b0b0;background:radial-gradient(circle,#8a8a8a 0,#a8a8a8 2px,#d8d8d8 3.5px,#f4f4f4 6px)"></div>
<div class="t" style="left:460px;top:405px;color:#8d8d8d">Нет</div>
<div class="rd" style="left:495px;top:405px;border-color:#c8c8c8;background:#f4f4f4"></div>
<div class="t" style="left:511px;top:405px;color:#8d8d8d">Да</div>
<div class="btn" style="left:567px;top:401px;width:160px;height:23px;line-height:21px;letter-spacing:-0.1px">Редактировать настройки...</div>
<div class="t" style="left:68px;top:433px;">Метки</div>
<div class="cb" style="left:117px;top:458px"><svg width="13" height="13"><path d="M3.3 7 L5.8 9.9 L9.8 2.8" stroke="#4a5f9f" stroke-width="1.9" fill="none" stroke-linecap="round"/></svg></div>
<div class="cb" style="left:346px;top:458px"><svg width="13" height="13"><path d="M3.3 7 L5.8 9.9 L9.8 2.8" stroke="#4a5f9f" stroke-width="1.9" fill="none" stroke-linecap="round"/></svg></div>
<div class="cb" style="left:546px;top:458px"><svg width="13" height="13"><path d="M3.3 7 L5.8 9.9 L9.8 2.8" stroke="#4a5f9f" stroke-width="1.9" fill="none" stroke-linecap="round"/></svg></div>
<div class="cb" style="left:117px;top:487px"><svg width="13" height="13"><path d="M3.3 7 L5.8 9.9 L9.8 2.8" stroke="#4a5f9f" stroke-width="1.9" fill="none" stroke-linecap="round"/></svg></div>
<div class="cb" style="left:346px;top:487px"><svg width="13" height="13"><path d="M3.3 7 L5.8 9.9 L9.8 2.8" stroke="#4a5f9f" stroke-width="1.9" fill="none" stroke-linecap="round"/></svg></div>
<div class="cb" style="left:546px;top:487px"><svg width="13" height="13"><path d="M3.3 7 L5.8 9.9 L9.8 2.8" stroke="#4a5f9f" stroke-width="1.9" fill="none" stroke-linecap="round"/></svg></div>
<div class="btn" style="left:138px;top:455px;width:187px;height:23px;line-height:21px;">Метка детали...</div>
<div class="btn" style="left:367px;top:455px;width:158px;height:23px;line-height:21px;">Метка болта...</div>
<div class="btn" style="left:567px;top:455px;width:160px;height:23px;line-height:21px;">Метка соседних деталей...</div>
<div class="btn" style="left:138px;top:484px;width:187px;height:23px;line-height:21px;">Метка обработки поверхности...</div>
<div class="btn" style="left:367px;top:484px;width:158px;height:23px;line-height:21px;">Метка соединения...</div>
<div class="btn" style="left:567px;top:484px;width:160px;height:23px;line-height:21px;">Метки армирования...</div>
<div class="sep" style="left:123px;top:521px;width:620px;box-shadow:0 1px 0 #fff"></div>
<div class="t" style="left:67px;top:516px;">Объекты</div>
<div class="cb" style="left:117px;top:543px"><svg width="13" height="13"><path d="M3.3 7 L5.8 9.9 L9.8 2.8" stroke="#4a5f9f" stroke-width="1.9" fill="none" stroke-linecap="round"/></svg></div>
<div class="cb" style="left:346px;top:543px"><svg width="13" height="13"><path d="M3.3 7 L5.8 9.9 L9.8 2.8" stroke="#4a5f9f" stroke-width="1.9" fill="none" stroke-linecap="round"/></svg></div>
<div class="cb" style="left:117px;top:570px"><svg width="13" height="13"><path d="M3.3 7 L5.8 9.9 L9.8 2.8" stroke="#4a5f9f" stroke-width="1.9" fill="none" stroke-linecap="round"/></svg></div>
<div class="cb" style="left:346px;top:570px"><svg width="13" height="13"><path d="M3.3 7 L5.8 9.9 L9.8 2.8" stroke="#4a5f9f" stroke-width="1.9" fill="none" stroke-linecap="round"/></svg></div>
<div class="cb" style="left:117px;top:601px"><svg width="13" height="13"><path d="M3.3 7 L5.8 9.9 L9.8 2.8" stroke="#4a5f9f" stroke-width="1.9" fill="none" stroke-linecap="round"/></svg></div>
<div class="cb" style="left:346px;top:601px"><svg width="13" height="13"><path d="M3.3 7 L5.8 9.9 L9.8 2.8" stroke="#4a5f9f" stroke-width="1.9" fill="none" stroke-linecap="round"/></svg></div>
<div class="cb" style="left:546px;top:543px"><svg width="13" height="13"><path d="M3.3 7 L5.8 9.9 L9.8 2.8" stroke="#4a5f9f" stroke-width="1.9" fill="none" stroke-linecap="round"/></svg></div>
<div class="cb" style="left:546px;top:570px"><svg width="13" height="13"><path d="M3.3 7 L5.8 9.9 L9.8 2.8" stroke="#4a5f9f" stroke-width="1.9" fill="none" stroke-linecap="round"/></svg></div>
<div class="btn" style="left:138px;top:538px;width:187px;height:23px;line-height:21px;">Деталь...</div>
<div class="btn" style="left:367px;top:538px;width:158px;height:23px;line-height:21px;">Болт...</div>
<div class="btn" style="left:567px;top:538px;width:160px;height:23px;line-height:21px;">Соседняя деталь...</div>
<div class="btn" style="left:138px;top:567px;width:187px;height:23px;line-height:21px;">Обработка поверхности...</div>
<div class="btn" style="left:367px;top:567px;width:158px;height:23px;line-height:21px;">Сварка...</div>
<div class="btn" style="left:567px;top:567px;width:160px;height:23px;line-height:21px;">Армирование...</div>
<div class="btn" style="left:138px;top:596px;width:187px;height:23px;line-height:21px;">Опорные объекты...</div>
<div class="btn" style="left:367px;top:596px;width:158px;height:23px;line-height:21px;">Сетка...</div>
<div class="sep" style="left:113px;top:633px;width:630px;box-shadow:0 1px 0 #fff"></div>
<div class="t" style="left:67px;top:628px;">Другие</div>
<div class="cb" style="left:117px;top:656px"><svg width="13" height="13"><path d="M3.3 7 L5.8 9.9 L9.8 2.8" stroke="#4a5f9f" stroke-width="1.9" fill="none" stroke-linecap="round"/></svg></div>
<div class="cb" style="left:346px;top:656px"><svg width="13" height="13"><path d="M3.3 7 L5.8 9.9 L9.8 2.8" stroke="#4a5f9f" stroke-width="1.9" fill="none" stroke-linecap="round"/></svg></div>
<div class="btn" style="left:138px;top:651px;width:187px;height:23px;line-height:21px;">Фильтр...</div>
<div class="btn" style="left:367px;top:651px;width:158px;height:23px;line-height:21px;letter-spacing:-0.25px">Фильтр соседних деталей...</div>
<div class="sep" style="left:64px;top:680px;width:679px;box-shadow:0 1px 0 #fff"></div>
<svg class="a" style="left:74px;top:464px" width="26" height="26"><defs><linearGradient id="gi" x1="0" y1="0" x2="1" y2="1"><stop offset="0" stop-color="#b8e0ff"/><stop offset="0.6" stop-color="#9ccaf0"/><stop offset="1" stop-color="#4a98e8"/></linearGradient></defs><rect x="8.5" y="4.5" width="8" height="9" fill="url(#gi)" stroke="#5a5aa0" stroke-width="1"/><path d="M6 16 L22 16" stroke="#1a4aa8" stroke-width="2"/><path d="M4.5 22.5 L11 16.5" stroke="#2050b0" stroke-width="1.3"/></svg>
<svg class="a" style="left:77px;top:566px" width="18" height="18"><defs><linearGradient id="gc" x1="0" y1="0" x2="1" y2="1"><stop offset="0" stop-color="#a0e0fa"/><stop offset="1" stop-color="#2a5cb0"/></linearGradient></defs><rect x="3.5" y="4" width="12" height="12" fill="#9a9a80" opacity="0.55" filter="blur(0.8px)"/><rect x="2.5" y="2.5" width="11" height="11" fill="url(#gc)" stroke="#42489a" stroke-width="1"/></svg>
<svg class="a" style="left:74px;top:650px" width="25" height="19"><rect x="3" y="3.5" width="20" height="14" fill="#a8a890" opacity="0.4"/><path d="M2.5 2.5 L17.5 2.5 L21.5 6 L21.5 15.5 L2.5 15.5 Z" fill="#fff" stroke="#4a52a0" stroke-width="1"/><path d="M17.5 2.5 L17.5 6 L21.5 6" fill="#8cc8f8" stroke="#3a4290" stroke-width="1"/><path d="M3 3 L17 3" stroke="#3a90e0"/><rect x="5" y="5" width="8" height="8" fill="#f2c810" stroke="#c89810" stroke-width="0.8"/><rect x="15" y="11" width="6" height="4" fill="#0a5cd0"/></svg>
<div class="btn" style="left:55px;top:698px;width:92px;height:23px;line-height:21px;">OK</div>
<div class="btn" style="left:153px;top:698px;width:140px;height:23px;line-height:21px;">Применить</div>
<div class="btn" style="left:299px;top:698px;width:131px;height:23px;line-height:21px;">Изменить</div>
<div class="btn" style="left:435px;top:698px;width:132px;height:23px;line-height:21px;">Получить</div>
<div class="btn" style="left:573px;top:699px;width:55px;height:20px;line-height:18px;"></div>
<div class="btn" style="left:634px;top:698px;width:119px;height:23px;line-height:21px;">Отмена</div>
<svg class="a" style="left:578px;top:702px" width="46" height="15"><path d="M1.5 13 L1.5 1.5 L13.5 1.5" stroke="#000" stroke-width="2" fill="none"/><rect x="2.5" y="2.5" width="10" height="10" fill="#fff"/><path d="M3.5 7.5 L6 10.5 L10.5 4" stroke="#000" stroke-width="2" fill="none"/><path d="M19.5 13.5 L25.5 1" stroke="#000" stroke-width="2.2"/><path d="M32.5 13 L32.5 1.5 L44.5 1.5" stroke="#000" stroke-width="2" fill="none"/><rect x="33.5" y="2.5" width="10" height="10" fill="#fff"/></svg>
<div class="a" style="left:59px;top:376px;width:686px;height:66px;border:5px solid #ed1c24"></div>

</body></html>
